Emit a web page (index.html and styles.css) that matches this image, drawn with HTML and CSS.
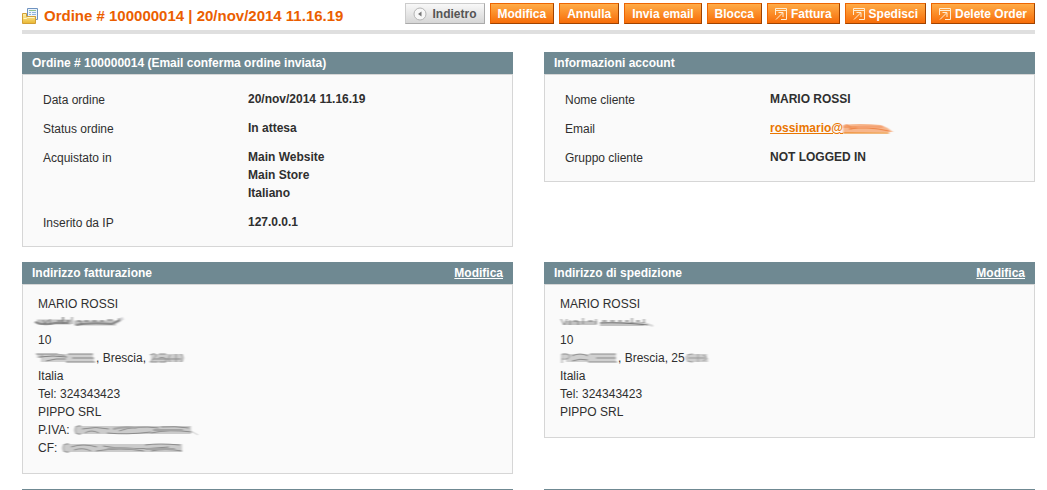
FILE: index.html
```
<!DOCTYPE html>
<html lang="it">

<head>
    <meta charset="UTF-8">
    <meta name="viewport" content="width=device-width, initial-scale=1.0">
    <title>Ordine # 100000014</title>
    <link rel="stylesheet" href="styles.css">
</head>

<body>
    <!-- shared shapes -->
    <svg class="defs" width="0" height="0" aria-hidden="true">
        <filter id="soft" x="-10%" y="-50%" width="120%" height="200%"><feGaussianBlur stdDeviation="0.8 0.5"/></filter>
        <linearGradient id="folder" x1="0" y1="0" x2="0" y2="1">
            <stop offset="0" stop-color="#fff3b0"/>
            <stop offset="1" stop-color="#e9b62f"/>
        </linearGradient>
        <symbol id="go" viewBox="0 0 12 12">
            <path d="M.5 7V.5h11v11H6M1 2.500h10M1 11.500l6.500-6.500M3.500 4.500h4.500v4.500" fill="none" stroke="#ffecd2" stroke-width="1"/>
        </symbol>
    </svg>

    <div class="page">
        <header class="content-header">
            <h1>
                <svg width="16" height="16" viewBox="0 0 16 16" aria-hidden="true">
                    <path d="M5.500.5h10v11h-10z" fill="#edf4fc" stroke="#6f93c0"/>
                    <path d="M7 2.500h7" stroke="#8fc58b"/>
                    <path d="M7 4.500h2m1 0h4M7 6.500h2m1 0h4M7 8.500h2m1 0h4" stroke="#8fb3dc"/>
                    <path d="M.5 15.500v-10h4v3h9v7z" fill="url(#folder)" stroke="#d29f35"/>
                    <path d="M1.500 10.500h3l1-1h7" fill="none" stroke="#fff6c8"/>
                </svg>
                Ordine # 100000014 | 20/nov/2014 11.16.19
            </h1>
            <div class="buttons">
                <button type="button" class="back">
                    <svg width="14" height="14" viewBox="0 0 14 14" aria-hidden="true">
                        <circle cx="7" cy="7" r="6" fill="#f7f7f7" stroke="#b5b5b5"/>
                        <path d="M8.500 4.500v5L5 7z" fill="#777"/>
                    </svg>
                    Indietro
                </button>
                <button type="button">Modifica</button>
                <button type="button">Annulla</button>
                <button type="button">Invia email</button>
                <button type="button">Blocca</button>
                <button type="button"><svg width="12" height="12" aria-hidden="true"><use href="#go"/></svg>Fattura</button>
                <button type="button"><svg width="12" height="12" aria-hidden="true"><use href="#go"/></svg>Spedisci</button>
                <button type="button"><svg width="12" height="12" aria-hidden="true"><use href="#go"/></svg>Delete Order</button>
            </div>
        </header>

        <main class="boxes">
            <section class="box">
                <div class="box-head"><h2>Ordine # 100000014 (Email conferma ordine inviata)</h2></div>
                <div class="box-body">
                    <table class="form-list">
                        <tr><th scope="row">Data ordine</th><td>20/nov/2014 11.16.19</td></tr>
                        <tr><th scope="row">Status ordine</th><td>In attesa</td></tr>
                        <tr><th scope="row">Acquistato in</th><td>Main Website<br>Main Store<br>Italiano</td></tr>
                        <tr><th scope="row">Inserito da IP</th><td>127.0.0.1</td></tr>
                    </table>
                </div>
            </section>

            <section class="box">
                <div class="box-head"><h2>Informazioni account</h2></div>
                <div class="box-body">
                    <table class="form-list">
                        <tr><th scope="row">Nome cliente</th><td>MARIO ROSSI</td></tr>
                        <tr><th scope="row">Email</th><td><a href="#">rossimario@<svg class="smudge" width="56" height="12" viewBox="0 0 56 12" aria-hidden="true">
                            <g filter="url(#soft)">
                                <path d="M0 3q16-2 38 0 6 2 12 7l-50 1z" fill="#f7b68c"/>
                                <path d="M0 5h16M6 7q18-3 40 2M2 3q5-1 6 5" fill="none" stroke="#ef8444"/>
                                <path d="M14 5q12-1 26 0" fill="none" stroke="#f4a273" stroke-width="2"/>
                                <path d="M0 11h46" fill="none" stroke="#ea7601"/>
                            </g>
                        </svg></a></td></tr>
                        <tr><th scope="row">Gruppo cliente</th><td>NOT LOGGED IN</td></tr>
                    </table>
                </div>
            </section>

            <section class="box">
                <div class="box-head"><h2>Indirizzo fatturazione</h2><a href="#">Modifica</a></div>
                <address class="box-body">
                    MARIO ROSSI<br>
                    <svg class="smudge out" width="92" height="12" viewBox="0 0 92 12" aria-hidden="true">
                        <g filter="url(#soft)" fill="none">
                            <path d="M3 6h34M40 7h42" stroke="#c2c2c2" stroke-width="5"/>
                            <path d="M82 7l7-5" stroke="#d5d5d8" stroke-width="3"/>
                            <path d="M1 6q8 4 20 1h14M42 9q14-3 36-1l8-4" stroke="#8b8b8b" stroke-width="2"/>
                            <path d="M9 4l2 4 3-4M16 3v5M23 5h6V1v7M32 5h4M38 1v7M43 5h4v4M50 5h5M58 5h5M66 5h4M73 4h6M84 3h2" stroke="#777"/>
                        </g>
                    </svg><br>
                    10<br>
                    <svg class="smudge" width="58" height="12" viewBox="0 0 58 12" aria-hidden="true">
                        <g filter="url(#soft)" fill="none">
                            <path d="M-1 4h56M5 8h51" stroke="#d0d0d0" stroke-width="4"/>
                            <path d="M-2 2h22M1 5q14-2 28 0M30 2h25M34 6h22M28 10h29M8 9q10-3 20-2" stroke="#848484"/>
                            <path d="M4 2v8M20 3q6-1 9 3" stroke="#999"/>
                        </g>
                    </svg>, Brescia, <svg class="smudge" width="37" height="12" viewBox="0 0 37 12" aria-hidden="true">
                        <g filter="url(#soft)" fill="none">
                            <path d="M2 4h32M2 8h32" stroke="#cecece" stroke-width="4"/>
                            <path d="M1 3q6-3 6 1l-6 6h8M10 2h7M10 6q8-2 7 4h-7M21 3q-3 4 0 7M27 2v8M32 2q4 4 0 8M4 7h28" stroke="#8b8b8b"/>
                        </g>
                    </svg><br>
                    Italia<br>
                    Tel: 324343423<br>
                    PIPPO SRL<br>
                    P.IVA: <svg class="smudge" width="126" height="12" viewBox="0 0 126 12" aria-hidden="true">
                        <g filter="url(#soft)" fill="none">
                            <path d="M2 6h116" stroke="#cbcbcb" stroke-width="8"/>
                            <path d="M8 2q-6-1-6 4t6 4M9 5q14-3 27 0M12 9q6-4 14 0M34 9q20 2 44-1M46 7q16-6 40-3M78 9q18-4 41-1M88 3q14-1 28 1" stroke="#8b8b8b"/>
                            <path d="M40 5q12-3 24-1M80 6h30" stroke="#a4a4a4" stroke-width="2"/>
                            <path d="M118 7l7 4" stroke="#ccc"/>
                        </g>
                    </svg><br>
                    CF: <svg class="smudge" width="124" height="12" viewBox="0 0 124 12" aria-hidden="true">
                        <g filter="url(#soft)" fill="none">
                            <path d="M2 6h119" stroke="#cbcbcb" stroke-width="8"/>
                            <path d="M8 2q-6-1-6 4t6 4M10 5q12-4 26 0M13 8q9-3 17 1M35 9q24-4 48 0M42 4q26 5 66 1M84 3q14-2 35 0M90 9q14-3 31 0" stroke="#8b8b8b"/>
                            <path d="M46 7q12-2 28 0M84 7h30" stroke="#a4a4a4" stroke-width="2"/>
                        </g>
                    </svg>
                </address>
            </section>

            <section class="box">
                <div class="box-head"><h2>Indirizzo di spedizione</h2><a href="#">Modifica</a></div>
                <address class="box-body">
                    MARIO ROSSI<br>
                    <svg class="smudge" width="94" height="12" viewBox="0 0 94 12" aria-hidden="true">
                        <g filter="url(#soft)" fill="none">
                            <path d="M5 7h32M40 8h44" stroke="#c2c2c2" stroke-width="4"/>
                            <path d="M84 7l9 3" stroke="#d8d8d8" stroke-width="2"/>
                            <path d="M1 3l3 6 3-6M10 4v5M13 5h5v4M23 2v6M28 5h5M36 3v5M40 7q20-1 48 2" stroke="#777"/>
                            <path d="M42 5h5M50 5h5M58 5h4M65 5h4M72 2v5M76 5h4M84 3v4" stroke="#666"/>
                        </g>
                    </svg><br>
                    10<br>
                    <svg class="smudge" width="58" height="12" viewBox="0 0 58 12" aria-hidden="true">
                        <g filter="url(#soft)" fill="none">
                            <path d="M3 4h53M6 8h50" stroke="#d0d0d0" stroke-width="4"/>
                            <path d="M2 11V2h5q5 2 0 5H2M12 4q8-4 16 0M30 2h26M36 6h20M28 10h29M12 9q8-3 16-1" stroke="#8b8b8b"/>
                        </g>
                    </svg>, Brescia, 25<svg class="smudge" width="27" height="12" viewBox="0 0 27 12" aria-hidden="true">
                        <g filter="url(#soft)" fill="none">
                            <path d="M2 4h20M2 8h21" stroke="#cecece" stroke-width="4"/>
                            <path d="M8 2q-7 0-7 4t7 4M13 2v8M18 3q7 3 0 6M3 6h17" stroke="#999"/>
                        </g>
                    </svg><br>
                    Italia<br>
                    Tel: 324343423<br>
                    PIPPO SRL
                </address>
            </section>

            <div class="next-box"></div>
            <div class="next-box"></div>
        </main>
    </div>
</body>

</html>
```

FILE: styles.css
```
* {
    box-sizing: border-box;
}

body {
    margin: 0;
    background-color: #fff;
    color: #2f2f2f;
    font: 12px/18px "Liberation Sans", Arial, sans-serif;
}

.defs {
    position: absolute;
}

.page {
    padding: 3px 12px 0 22px;
}

/* title and buttons */
.content-header {
    display: flex;
    justify-content: space-between;
    align-items: flex-start;
    padding-bottom: 6px;
    border-bottom: 4px solid #dfdfdf;
    margin-bottom: 18px;
}

h1 {
    display: flex;
    align-items: center;
    gap: 6px;
    margin: 4px 0 0;
    color: #eb5e00;
    font-size: 15px;
    line-height: 17px;
    white-space: nowrap;
}

h1 svg {
    flex: none;
}

.buttons {
    display: flex;
    gap: 5px;
}

button {
    display: flex;
    align-items: center;
    gap: 4px;
    height: 21px;
    padding: 0 7px;
    border: 1px solid;
    border-color: #ed6502 #a04300 #a04300 #ed6502;
    background: linear-gradient(#ffac47, #f76d09);
    color: #fff;
    font: bold 12px/16px "Liberation Sans", Arial, sans-serif;
    white-space: nowrap;
    cursor: pointer;
}

button.back {
    gap: 6px;
    border-color: #ccc #aaa #aaa #ccc;
    background: linear-gradient(#f8f8f8, #d6d6d6);
    color: #555;
}

/* boxes */
.boxes {
    display: grid;
    grid-template-columns: 1fr 1fr;
    gap: 15px 31px;
    align-items: start;
}

.box-head {
    display: flex;
    justify-content: space-between;
    padding: 2px 10px;
    background-color: #6f8992;
    color: #fff;
    font-weight: bold;
}

.box-head h2 {
    margin: 0;
    font-size: 12px;
    line-height: 18px;
}

.box-head a {
    color: #fff;
}

.box-body {
    display: block;
    padding: 10px 20px 9px;
    border: 1px solid #d6d6d6;
    background-color: #fafafa;
}

address.box-body {
    padding: 10px 15px 16px;
    font-style: normal;
}

.form-list {
    width: 100%;
    border-collapse: collapse;
}

.form-list th,
.form-list td {
    padding: 5px 0 6px;
    text-align: left;
    vertical-align: top;
}

.form-list th {
    width: 205px;
    padding: 6px 0 5px;
    font-weight: normal;
}

.form-list td {
    font-weight: bold;
}

.form-list a {
    color: #ea7601;
}

/* scribbled out text */
.smudge {
    height: 12px;
    vertical-align: -2px;
    overflow: visible;
}

.smudge.out {
    margin-left: -4px;
}

.next-box {
    height: 1px;
    background-color: #6f8992;
}
```
